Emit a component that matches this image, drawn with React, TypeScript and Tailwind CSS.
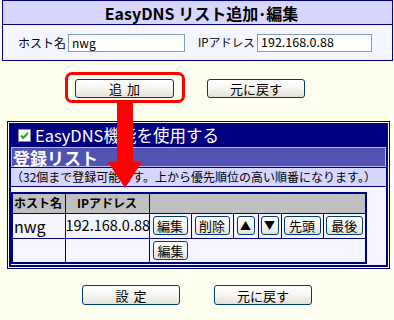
import React from "react";

const btn =
  "flex items-center justify-center rounded-[3px] border border-[#003c74] bg-linear-to-b from-white via-[#f6f5f0] to-[#e3e1d6] text-black leading-none whitespace-nowrap";

function SmallBtn({ children, w = 35 }: { children: React.ReactNode; w?: number }) {
  return (
    <div
      className={`${btn} h-[19px] text-[13px] border-[#2f3c55]`}
      style={{ width: w }}
    >
      {children}
    </div>
  );
}

export default function App() {
  return (
    <div
      className="relative w-[394px] h-[320px] overflow-hidden bg-[#fffff0] text-black"
      style={{ fontFamily: '"Noto Sans CJK JP", "Liberation Sans", sans-serif' }}
    >
      {/* Top box */}
      <div className="ml-[2px] w-[391px] h-[61px] border border-[#000080] bg-[#f5f5ff]">
        <div className="h-[24px] border-b border-[#000080] bg-[#d6d6ff] flex items-center justify-center text-[16px] font-bold leading-none pl-[8px]">
          EasyDNS リスト追加･編集
        </div>
        <div className="flex items-center h-[35px] pl-[15px] text-[12px] leading-none whitespace-nowrap">
          <span className="w-[50px] shrink-0">ホスト名</span>
          <div className="w-[117px] shrink-0 h-[18px] border border-[#7f9db9] bg-white flex items-center px-[3px] text-[12px]">
            nwg
          </div>
          <span className="ml-[13px] w-[59px] shrink-0 text-[11.5px]">IPアドレス</span>
          <div className="w-[115px] shrink-0 h-[18px] border border-[#7f9db9] bg-white flex items-center px-[3px] text-[12.5px]">
            192.168.0.88
          </div>
        </div>
      </div>

      {/* Add / revert */}
      <div className="flex mt-[18px]">
        <div className={`${btn} ml-[75px] w-[99px] h-[19px] text-[13px] tracking-[0.4em] pl-[0.4em]`}>追加</div>
        <div className={`${btn} ml-[33px] w-[98px] h-[19px] text-[13px]`}>元に戻す</div>
      </div>

      {/* Main box */}
      <div className="mt-[23px] ml-[7px] w-[383px] border border-[#000080] p-px bg-[#fffff0]">
        <div className="bg-[#000080] px-[2px] pb-[2px]">
          <div className="h-[24px] flex items-center pl-[7px] text-white text-[16.5px] leading-none whitespace-nowrap">
            <svg width="13" height="13" viewBox="0 0 13 13" className="mr-[4px]">
              <rect x="0.5" y="0.5" width="12" height="12" fill="#fff" stroke="#8a8a8a" />
              <path d="M3 6.5 L5.3 9 L10 3.8" fill="none" stroke="#21a121" strokeWidth="2" />
            </svg>
            EasyDNS機能を使用する
          </div>
          <div className="h-[20px] bg-[#5252b5] border border-[#b8b8f0] flex items-center pl-[1px] text-white font-bold text-[17px] leading-none">
            登録リスト
          </div>
          <div className="mt-px h-[18px] bg-[#d6d6ff] flex items-center text-[12px] leading-none whitespace-nowrap">
            （32個まで登録可能です。上から優先順位の高い順番になります。）
          </div>
          <div className="mt-px h-[78px] bg-[#f5f5ff] pt-[5px]">
            <table className="table-fixed w-[354px] border-collapse border-2 border-[#000080] text-[16px] leading-none whitespace-nowrap">
              <colgroup>
                <col className="w-[53px]" />
                <col className="w-[84px]" />
                <col className="w-[217px]" />
              </colgroup>
              <tbody>
                <tr className="h-[20px] bg-[#c0c0c0] text-[12px] font-bold">
                  <td className="border border-[#000080] pl-px p-0">ホスト名</td>
                  <td className="border border-[#000080] text-center p-0">IPアドレス</td>
                  <td className="border border-[#000080] p-0"></td>
                </tr>
                <tr className="h-[25px] bg-[#f5f5ff]">
                  <td className="border border-[#000080] pl-px p-0">nwg</td>
                  <td className="border border-[#000080] p-0 text-[14.5px]">192.168.0.88</td>
                  <td className="border border-[#000080] p-0">
                    <div className="flex h-[24px] items-center">
                      <div className="w-[42px] h-full flex items-center justify-center border-r border-[#000080]"><SmallBtn>編集</SmallBtn></div>
                      <div className="w-[42px] h-full flex items-center justify-center border-r border-[#000080]"><SmallBtn>削除</SmallBtn></div>
                      <div className="w-[25px] h-full flex items-center justify-center border-r border-[#000080]"><SmallBtn w={18}><span className="text-[11px]">▲</span></SmallBtn></div>
                      <div className="w-[23px] h-full flex items-center justify-center border-r border-[#000080]"><SmallBtn w={18}><span className="text-[11px]">▼</span></SmallBtn></div>
                      <div className="w-[42px] h-full flex items-center justify-center border-r border-[#000080]"><SmallBtn w={37}>先頭</SmallBtn></div>
                      <div className="flex-1 h-full flex items-center justify-center"><SmallBtn w={37}>最後</SmallBtn></div>
                    </div>
                  </td>
                </tr>
                <tr className="h-[24px] bg-[#f5f5ff]">
                  <td className="border border-[#000080] p-0"></td>
                  <td className="border border-[#000080] p-0"></td>
                  <td className="border border-[#000080] p-0">
                    <div className="flex h-[23px] items-center">
                      <div className="w-[42px] flex items-center justify-center"><SmallBtn>編集</SmallBtn></div>
                    </div>
                  </td>
                </tr>
              </tbody>
            </table>
          </div>
        </div>
      </div>

      {/* Bottom buttons */}
      <div className="flex mt-[16px]">
        <div className={`${btn} ml-[82px] w-[98px] h-[20px] text-[13px] tracking-[0.4em] pl-[0.4em]`}>設定</div>
        <div className={`${btn} ml-[34px] w-[98px] h-[20px] text-[13px]`}>元に戻す</div>
      </div>

      {/* Red highlight overlay */}
      <div className="absolute left-[65px] top-[72px] w-[120px] h-[31px] border-[3px] border-[#ff0000] rounded-[7px]" />
      <svg className="absolute left-[104px] top-[102px]" width="42" height="88" viewBox="0 0 42 88">
        <polygon points="13,0 29,0 29,60 38,60 21,86 4,60 13,60" fill="#ff0000" />
      </svg>
    </div>
  );
}
